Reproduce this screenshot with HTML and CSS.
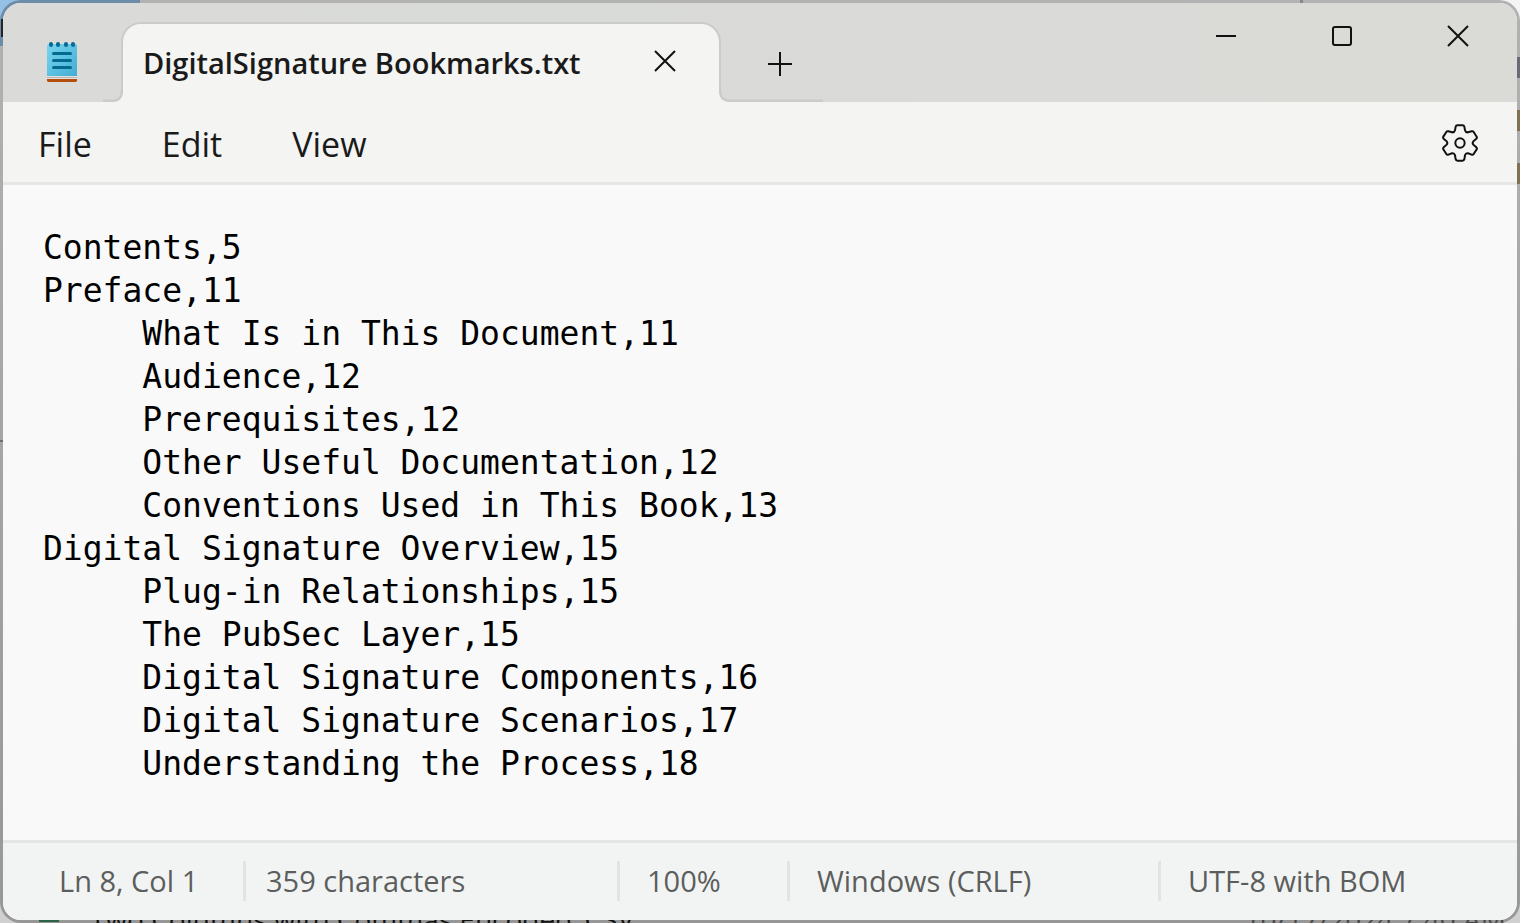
FILE: index.html
```html
<!DOCTYPE html>
<html lang="en">
<head>
<meta charset="utf-8">
<title>DigitalSignature Bookmarks.txt - Notepad</title>
<meta name="viewport" content="width=device-width, initial-scale=1">
<link rel="stylesheet" href="styles.css">
</head>
<body>
<div class="desktop">
  <div class="behind" aria-hidden="true">
    <span class="behind-tile"></span>
    <span class="behind-mark"></span>
    <span class="behind-pane"></span>
    <span class="behind-bar"></span>
    <span class="behind-edge edge-blue"></span>
    <span class="behind-edge edge-first"></span>
    <span class="behind-edge edge-second"></span>
    <span class="behind-sheet"></span>
    <span class="behind-file">Two Columns with Commas Encoded_CSV</span>
    <span class="behind-date">10/17/2024 7:40 AM</span>
  </div>
  <main class="window">
    <header class="titlebar">
      <svg class="app-icon" width="32" height="42" viewBox="0 0 32 42" aria-hidden="true">
        <defs><linearGradient id="page" x1="0" y1="0" x2="1" y2="1"><stop offset="0" stop-color="#78d6f0"/><stop offset="1" stop-color="#43add3"/></linearGradient></defs>
        <path fill="#b3510c" d="M1 36h30v4l-1 1H2l-1-1z"/>
        <path fill="#e4e1df" d="M1 33h30v5H1z"/>
        <path fill="#b9b5b2" d="M1 36h30v1H1z"/>
        <path fill="url(#page)" d="M1 5q0-2 2-2h26q2 0 2 2v30H1z"/>
        <g fill="#066b93"><rect x="3" y="1" width="4" height="5" rx="2"/><rect x="10" y="1" width="4" height="5" rx="2"/><rect x="18" y="1" width="4" height="5" rx="2"/><rect x="25" y="1" width="4" height="5" rx="2"/></g>
        <path stroke="#056a90" stroke-width="3" stroke-linecap="round" d="M7.500 12.500h17M7.500 19.500h17M7.500 26.500h17"/>
      </svg>
      <div class="tab">
        <svg class="flare flare-left" width="20" height="12" viewBox="0 0 20 12" aria-hidden="true"><path fill="#f4f4f3" d="M20 0v12H8z"/><path fill="#dadbd9" d="M0 0h20q0 10-9 10H0z"/><path fill="none" stroke="#cbccca" stroke-width="2.500" d="M0 10.700h10q9 0 9-10.700"/></svg>
        <span class="tab-name">DigitalSignature Bookmarks.txt</span>
        <button class="tab-close" type="button" aria-label="Close tab"><svg width="22" height="22" viewBox="0 0 22 22"><path d="M1 1l20 20M21 1L1 21"/></svg></button>
        <svg class="flare flare-right" width="104" height="12" viewBox="0 0 104 12" aria-hidden="true"><path fill="#f4f4f3" d="M0 0v12h12z"/><path fill="#dadbd9" d="M0 0h104v10H10Q0 10 0 0z"/><path fill="none" stroke="#cbccca" stroke-width="2.500" d="M1 0q0 10.700 9 10.700h94"/></svg>
      </div>
      <button class="new-tab" type="button" aria-label="New tab"><svg width="24" height="24" viewBox="0 0 24 24"><path d="M12 0v24M0 12h24"/></svg></button>
      <div class="controls">
        <button type="button" aria-label="Minimize"><svg width="22" height="22" viewBox="0 0 22 22"><path d="M1 11h20"/></svg></button>
        <button type="button" aria-label="Maximize"><svg width="22" height="22" viewBox="0 0 22 22"><rect x="2" y="2" width="18" height="18" rx="2"/></svg></button>
        <button type="button" aria-label="Close"><svg width="22" height="22" viewBox="0 0 22 22"><path d="M1 1l20 20M21 1L1 21"/></svg></button>
      </div>
    </header>
    <nav class="menubar">
      <button type="button">File</button>
      <button type="button">Edit</button>
      <button type="button">View</button>
      <button class="settings" type="button" aria-label="Settings"><svg width="36" height="38" viewBox="66 72 108 114"><path d="M112 76h16q4 0 5 4l2 11q2 7 9 6l11-3q4-1 6 2l9 14q2 3-1 6l-9 8q-4 5 0 10l9 8q3 3 1 6l-9 14q-2 3-6 2l-11-4q-7-1-9 6l-2 12q-1 4-5 4h-16q-4 0-5-4l-2-12q-2-7-9-6l-11 4q-4 1-6-2l-9-14q-2-3 1-6l9-8q4-5 0-10l-9-8q-3-3-1-6l9-14q2-3 6-2l11 3q7 1 9-6l2-11q1-4 5-4z"/><circle cx="120" cy="129" r="14"/></svg></button>
    </nav>
    <textarea class="editor" aria-label="Text editor" spellcheck="false">Contents,5
Preface,11
     What Is in This Document,11
     Audience,12
     Prerequisites,12
     Other Useful Documentation,12
     Conventions Used in This Book,13
Digital Signature Overview,15
     Plug-in Relationships,15
     The PubSec Layer,15
     Digital Signature Components,16
     Digital Signature Scenarios,17
     Understanding the Process,18</textarea>
    <footer class="statusbar">
      <span class="cell cell-position">Ln 8, Col 1</span>
      <span class="cell cell-count">359 characters</span>
      <span class="cell">100%</span>
      <span class="cell">Windows (CRLF)</span>
      <span class="cell">UTF-8 with BOM</span>
    </footer>
  </main>
</div>
</body>
</html>
```

FILE: styles.css
```css
* { box-sizing: border-box; }
body { margin: 0; font-family: "Open Sans", "Noto Sans", sans-serif; color: #1a1a1a; }
button { border: 0; padding: 0; background: none; font: inherit; color: inherit; }
svg { display: block; }

.desktop {
  position: relative;
  display: flex;
  min-height: 100vh;
  padding: 3px;
  overflow: hidden;
  background: linear-gradient(#f4f4f4, #d0d0d0);
}
.behind { position: absolute; inset: 0; font-size: 28px; line-height: 32px; white-space: nowrap; }
.behind span { position: absolute; }
.behind-tile { left: 0; top: 0; width: 140px; height: 46px; background: #96c0e6; }
.behind-mark { left: 1px; top: 19px; width: 2px; height: 18px; background: #333; }
.behind-pane { left: 0; top: 440px; width: 3px; height: 2px; background: #999; }
.behind-bar { left: 1300px; top: 0; width: 3px; height: 3px; background: #bbb; }
.behind-edge { right: 0; width: 3px; height: 21px; }
.edge-blue { top: 57px; background: #8f92a4; }
.edge-first { top: 110px; background: #b39a72; }
.edge-second { top: 163px; background: #b39a72; }
.behind-sheet { left: 39px; bottom: 1px; width: 20px; height: 2px; background: #3d8a62; }
.behind-file { left: 90px; bottom: -12px; }
.behind-date { right: 14px; bottom: -12px; color: #666; }

.window {
  position: relative;
  flex: 1;
  display: flex;
  flex-direction: column;
  min-width: 0;
  overflow: hidden;
  border-radius: 18px;
  background: #f9f9f9;
  box-shadow: 0 0 0 3px rgba(0, 0, 0, .27);
}

.titlebar { display: flex; height: 99px; background: linear-gradient(90deg, #dadbd9, #d9dbd8 40%, #dadad9 60%, #dadbd6); }
.app-icon { margin: 38px 43px 0 43px; }
.tab {
  position: relative;
  display: flex;
  align-items: center;
  justify-content: space-between;
  width: 600px;
  margin-top: 19px;
  padding: 0 43px 0 20px;
  border: 2px solid #cbccca;
  border-bottom: 0;
  border-radius: 20px 20px 0 0;
  background: #f4f4f3;
}
.tab-name { font-size: 29px; line-height: 40px; font-weight: 600; white-space: nowrap; }
.tab-close { margin-bottom: 4px; }
.flare { position: absolute; bottom: 0; }
.flare-left { right: 100%; }
.flare-right { left: 100%; }
.new-tab { align-self: center; margin: 22px 0 0 47px; }
.controls { display: flex; margin: 0 1px 0 auto; height: 66px; }
.controls button { display: grid; place-items: center; width: 116px; }
.titlebar button svg, .settings svg { fill: none; stroke: #111; stroke-width: 2; }

.menubar {
  display: flex;
  align-items: center;
  gap: 70px;
  height: 83px;
  padding: 4px 39px 0 35px;
  border-bottom: 3px solid #e6e6e4;
  background: #f4f4f3;
  font-size: 34px;
  line-height: 48px;
}
.menubar .settings { margin: 0 0 2px auto; }
.settings svg { stroke-width: 6; }

.editor {
  flex: 1;
  min-height: 600px;
  padding: 41px 40px 0;
  border: 0;
  outline: 0;
  resize: none;
  background: #f9f9f9;
  color: #000;
  font-family: "DejaVu Sans Mono", monospace;
  font-size: 33px;
  line-height: 43px;
  white-space: pre;
}

.statusbar {
  display: grid;
  grid-template-columns: 240fr 374fr 170fr 371fr 359fr;
  align-items: center;
  height: 80px;
  padding-bottom: 2px;
  border-top: 3px solid #e4e6e5;
  background: #f2f4f3;
  color: #5c5e5d;
  font-size: 29px;
  line-height: 40px;
}
.cell { padding-left: 27px; border-left: 3px solid #e2e4e3; white-space: nowrap; }
.cell-position { padding-left: 56px; border-left: 0; }
.cell-count { padding-left: 20px; }
```
